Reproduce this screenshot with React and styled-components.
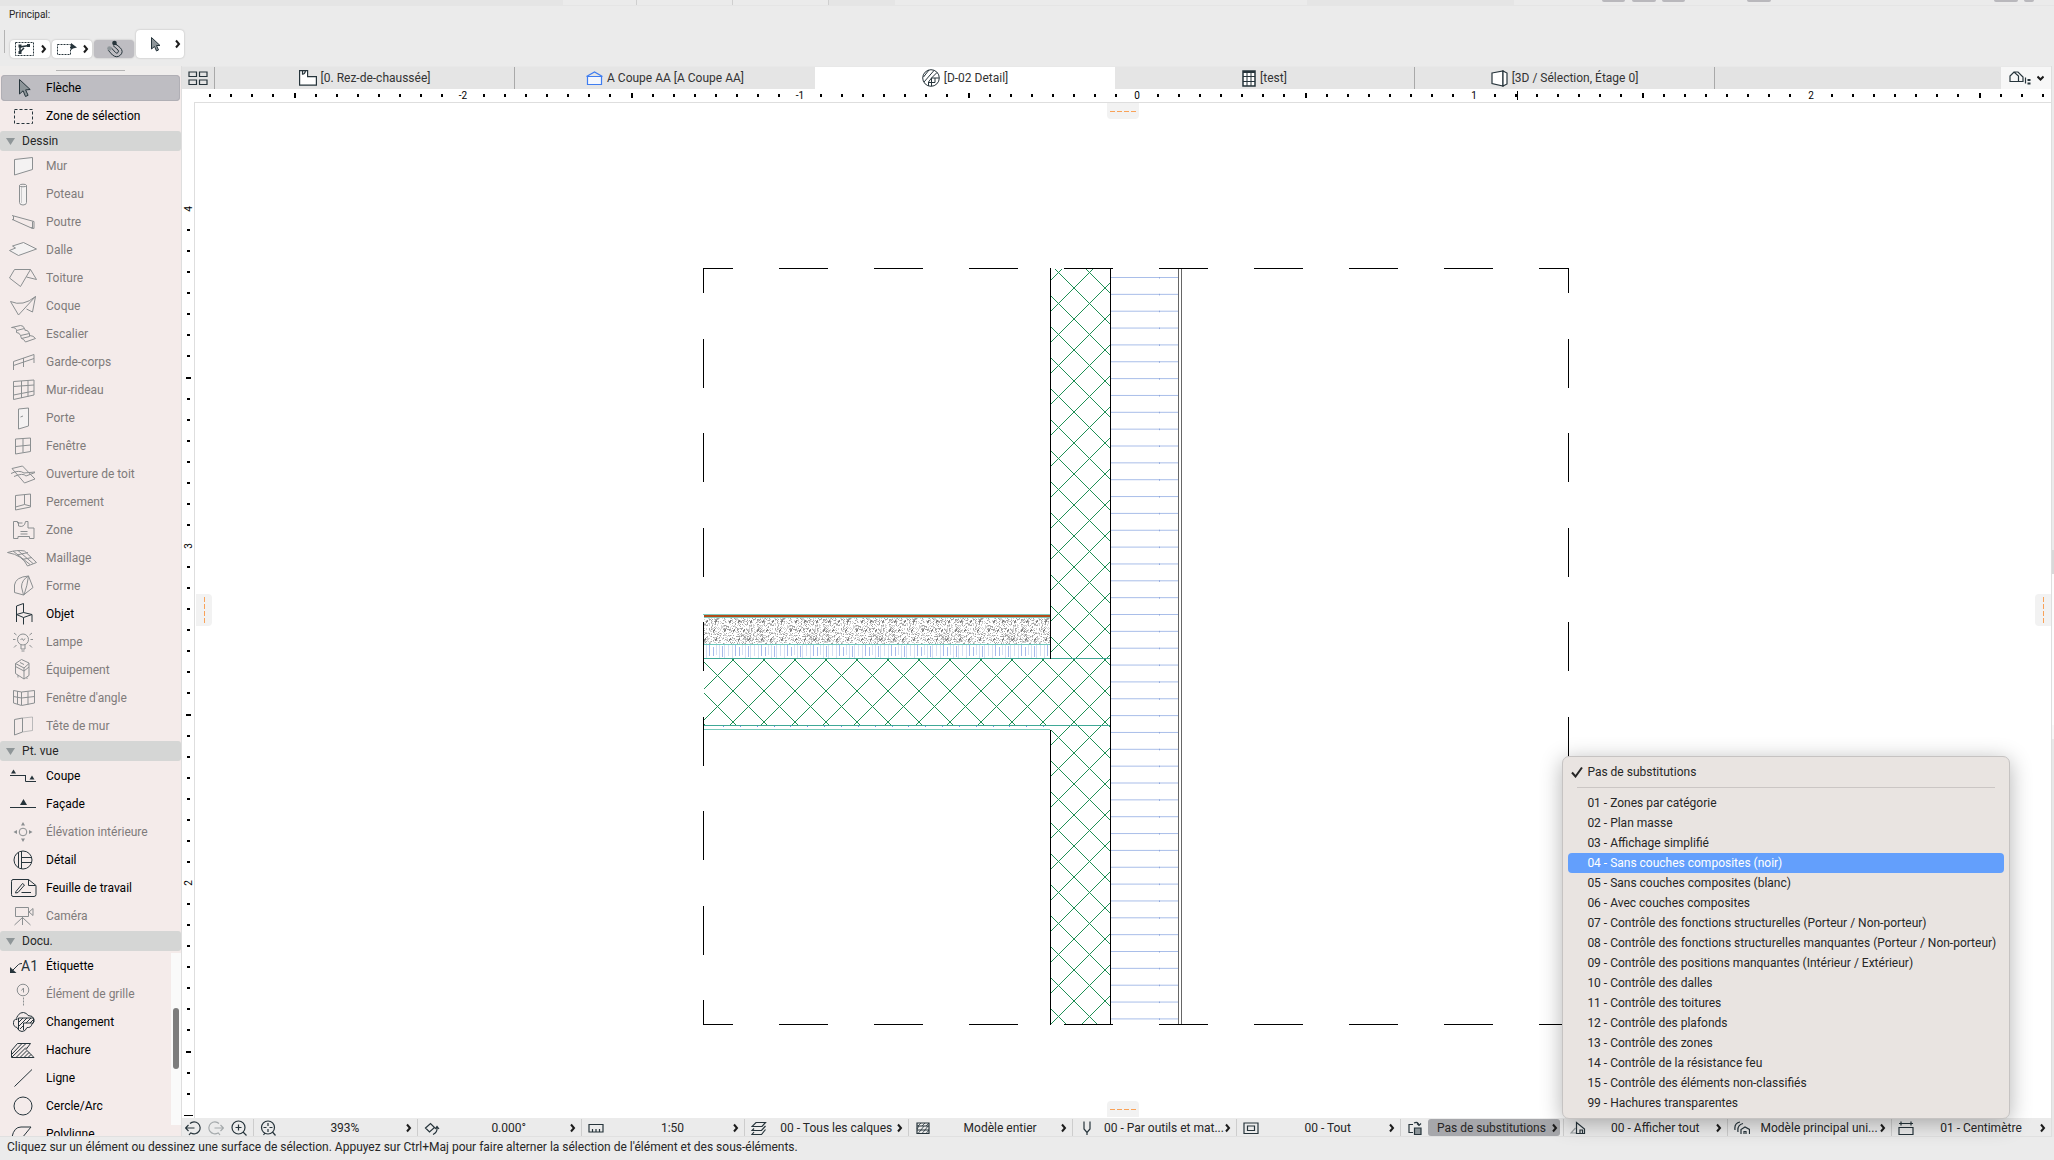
import React from "react";
import { useState } from "react";
import styled, { createGlobalStyle } from "styled-components";

const colors = {
  panel: "#ebebeb",
  strip: "#e5e5e5",
  border: "#dedede",
  palette: "#f4ebea",
  header: "#d5d6d5",
  ink: "#26343b",
  dim: "#8b8f91",
  selected: "#bebdc2",
  accent: "#639ffc",
};

const GlobalStyle = createGlobalStyle`
  * {
    box-sizing: border-box;
  }
  body {
    margin: 0;
    background: ${colors.panel};
    color: #262626;
    font-family: Roboto, Inter, "Liberation Sans", sans-serif;
    font-size: 12px;
    line-height: 16px;
  }
  button {
    font: inherit;
    color: inherit;
    border: none;
    background: none;
    padding: 0;
    margin: 0;
  }
  svg {
    display: block;
    flex: none;
  }
`;

const Window = styled.div`
  display: flex;
  flex-direction: column;
  height: 100vh;
  overflow: hidden;
`;

const TopStrip = styled.div`
  display: flex;
  height: 6px;
  flex: none;
  border-bottom: 1px solid ${colors.strip};
`;

const StripPart = styled.div`
  flex: ${(props) => props.$grow} 0 0;
  background: ${(props) => (props.$dark ? colors.strip : colors.panel)};
  border-right: ${(props) => (props.$tick ? "1px solid #cfcfcf" : "none")};
`;

const StripStub = styled.div`
  flex: ${(props) => props.$grow} 0 0;
  height: 2px;
  border-radius: 0 0 2px 2px;
  background: ${(props) => (props.$on ? "#b9b8bc" : "transparent")};
`;

const Toolbar = styled.header`
  display: flex;
  flex-direction: column;
  justify-content: space-between;
  height: 60px;
  flex: none;
  padding: 1px 9px 8px;
  background: ${colors.panel};
`;

const ToolbarTitle = styled.div`
  font-size: 10px;
  line-height: 16px;
`;

const ToolbarRow = styled.div`
  display: flex;
  align-items: flex-end;
  gap: 2px;
  margin-left: -5px;
`;

const ToolbarGrip = styled.div`
  width: 1px;
  height: 23px;
  margin-right: 3px;
  align-self: flex-start;
  background: #b4b4b4;
`;

const ToolButton = styled.button`
  display: flex;
  align-items: center;
  justify-content: ${(props) => (props.$pressed ? "center" : "space-between")};
  width: ${(props) => (props.$large ? 48 : 40)}px;
  height: ${(props) => (props.$large ? 28 : 18)}px;
  padding: ${(props) => (props.$large ? "0 3px 0 14px" : "0 3px 0 5px")};
  border-radius: 4px;
  background: ${(props) => (props.$pressed ? colors.selected : "#fff")};
  box-shadow: 0 0 2px rgba(0, 0, 0, 0.25);
`;

const Main = styled.div`
  display: grid;
  grid-template-columns: 182px minmax(0, 1fr);
  flex: 1;
  min-height: 0;
`;

const Sidebar = styled.nav`
  display: flex;
  flex-direction: column;
  min-height: 0;
  border-right: 1px solid ${colors.border};
  border-bottom: 1px solid #e0e0e0;
  background: ${colors.palette};
`;

const SidebarGrip = styled.div`
  display: flex;
  justify-content: center;
  align-items: center;
  height: 9px;
  flex: none;
  background: #efedec;

  &::after {
    content: "";
    width: 69px;
    height: 1px;
    background: #b4b4b4;
  }
`;

const SectionHeader = styled.button`
  display: flex;
  align-items: center;
  gap: 7px;
  width: 100%;
  height: 20px;
  flex: none;
  margin: 1px 0;
  padding-left: 6px;
  border-radius: 3px;
  background: ${colors.header};
`;

const Tool = styled.button`
  display: flex;
  align-items: center;
  gap: 7px;
  width: 179px;
  height: 28px;
  flex: none;
  padding-left: 7px;
  color: #000;
  text-align: left;

  svg {
    width: 32px;
    height: 24px;
    color: ${colors.ink};
  }

  &:disabled {
    color: #7f7b7b;
  }

  &:disabled svg {
    color: ${colors.dim};
  }

  &[aria-pressed="true"] {
    height: 26px;
    margin: 0 1px 1px;
    padding-left: 6px;
    border-radius: 4px;
    background: ${colors.selected};
    box-shadow: inset 0 0 0 1px #b0afb5;
  }
`;

const ScrollSection = styled.div`
  display: flex;
  flex: 1;
  min-height: 0;
  overflow: hidden;
`;

const ScrollList = styled.div`
  flex: 1;
  min-width: 0;
`;

const ScrollTrack = styled.div`
  display: flex;
  justify-content: center;
  width: 10px;
  margin: 1px 0 11px;
  padding-top: 55px;
  background: #fafafa;

  &::after {
    content: "";
    width: 6px;
    height: 61px;
    border-radius: 3px;
    background: #7d7d7d;
  }
`;

const Workspace = styled.main`
  display: grid;
  grid-template-rows: 23px 13px minmax(0, 1fr) 19px;
  grid-template-columns: minmax(0, 1fr) 3px;
  min-width: 0;
`;

const TabBar = styled.div`
  display: flex;
  border-top: 1px solid #e8e8e8;
  background: #e3e3e3;
`;

const OverviewButton = styled.button`
  display: flex;
  align-items: center;
  justify-content: center;
  width: 33px;
  flex: none;
  border-right: 1px solid #a9a9a9;
`;

const Tab = styled.button`
  display: flex;
  align-items: center;
  justify-content: center;
  gap: 4px;
  flex: 0 1 300px;
  min-width: 0;
  white-space: nowrap;
  color: #333;
  background: ${(props) => (props.$active ? "#fff" : "#e5e5e5")};
  border-right: ${(props) => (props.$line ? "1px solid #a9a9a9" : "none")};
`;

const TabMenu = styled.button`
  display: flex;
  align-items: center;
  justify-content: center;
  gap: 6px;
  width: 50px;
  margin-left: auto;
  background: #f7f7f7;
`;

const Gutter = styled.div`
  display: flex;
  flex-direction: column;
  grid-column: 2;
  grid-row: 1 / 5;
  border-left: 1px solid ${colors.border};
`;

const GutterPart = styled.div`
  flex: ${(props) => props.$grow} 0 0;
  background: ${(props) => props.$tone};
`;

const HorizontalRuler = styled.div`
  grid-column: 1;
  overflow: hidden;
  background: #fff;

  svg {
    width: 100%;
    height: 13px;
  }
`;

const CanvasRow = styled.div`
  display: flex;
  grid-column: 1;
  min-height: 0;
  background: #fff;
`;

const VerticalRuler = styled.div`
  width: 13px;
  flex: none;
  overflow: hidden;
  border-right: 1px solid ${colors.border};

  svg {
    width: 13px;
    height: 100%;
  }
`;

const Canvas = styled.div`
  position: relative;
  flex: 1;
  min-width: 0;
  overflow: hidden;
`;

const DrawingSvg = styled.svg`
  width: 100%;
  height: 100%;
  border-top: 1px solid ${colors.border};
`;

const edgePlaces = {
  top: "top: 1px; left: calc(50% - 16px); border-radius: 0 0 4px 4px;",
  bottom: "bottom: 1px; left: calc(50% - 16px); border-radius: 4px 4px 0 0;",
  left: "left: 1px; top: calc(50% - 16px); border-radius: 0 4px 4px 0;",
  right: "right: 0; top: calc(50% - 16px); border-radius: 4px 0 0 4px;",
};

const EdgeHandle = styled.div`
  position: absolute;
  display: flex;
  flex-direction: ${(props) => (props.$vertical ? "column" : "row")};
  align-items: center;
  justify-content: center;
  gap: 2px;
  width: ${(props) => (props.$vertical ? 16 : 32)}px;
  height: ${(props) => (props.$vertical ? 32 : 16)}px;
  background: #f2f2f2;
  ${(props) => edgePlaces[props.$edge]}

  i {
    width: ${(props) => (props.$vertical ? 1 : 5)}px;
    height: ${(props) => (props.$vertical ? 5 : 1)}px;
    background: #f9a258;
  }
`;

const OptionBar = styled.div`
  display: flex;
  grid-column: 1;
  min-width: 0;
  background: ${colors.panel};
  padding-top: 1px;
  border-bottom: 1px solid #e0e0e0;
`;

const ZoomGroup = styled.div`
  display: flex;
  align-items: center;
  gap: 7px;
  width: 72px;
  flex: none;
  padding-left: 3px;
  border-right: 1px solid #cdcdcd;
`;

const OptionCell = styled.div`
  position: relative;
  display: flex;
  align-items: center;
  flex: ${(props) => (props.$last ? 160 : 164)} 0 0;
  min-width: 0;
  padding: 0 3px 0 6px;
  border-right: ${(props) => (props.$last ? "none" : "1px solid #cdcdcd")};
`;

const OptionIcon = styled.span`
  display: flex;
  width: 21px;
  flex: none;
`;

const OptionButton = styled.button`
  display: flex;
  align-items: center;
  flex: 1;
  min-width: 0;
  height: 17px;
  padding: 0 2px 0 4px;
  border-radius: 3px;
  background: ${(props) => (props.$open ? "#a6a7ab" : "transparent")};
`;

const OptionLabel = styled.span`
  flex: 1;
  min-width: 0;
  white-space: nowrap;
  text-align: center;
`;

const Menu = styled.ul`
  position: absolute;
  left: calc(100% - 1px);
  bottom: 100%;
  z-index: 5;
  width: 448px;
  margin: 0;
  padding: 5px;
  list-style: none;
  border-radius: 7px;
  border: 1px solid #c6c3c2;
  background: #e9e4e1;
  box-shadow: 0 4px 22px rgba(0, 0, 0, 0.3);
`;

const MenuItem = styled.li`
  button {
    display: flex;
    align-items: center;
    gap: 4px;
    width: 100%;
    height: 20px;
    padding-left: 3px;
    border-radius: 4px;
    white-space: nowrap;
    color: ${(props) => (props.$active ? "#fff" : "#262626")};
    background: ${(props) => (props.$active ? colors.accent : "transparent")};
  }
`;

const CheckSlot = styled.span`
  display: flex;
  width: 12px;
  flex: none;
`;

const MenuRule = styled.li`
  height: 1px;
  margin: 5px 9px;
  background: #cbc6c4;
`;

const StatusBar = styled.footer`
  height: 23px;
  flex: none;
  padding: 2px 7px;
  background: ${colors.panel};
`;

/* palette icons, all on a 32 x 24 grid */
const shapes = {
  arrow: (
    <path
      d="M12.5 3.5V18l3.6-3.2 2.4 5.7 2.6-1.2-2.5-5.4 4.6-.4z"
      fill="#8d9599"
    />
  ),
  marquee: <rect x="7.5" y="5.5" width="18" height="14" strokeDasharray="3 2" />,
  wall: <path d="M7.5 5.5l18-2v12l-18 5.5z" fill="#f4f2f2" />,
  column: (
    <>
      <path d="M12.5 3.5v17q0 2.5 3.5 2.5t3.5-2.5v-17" fill="#f4f2f2" />
      <ellipse cx="16" cy="3.5" rx="3.5" ry="1.3" />
      <path d="M14.5 5v16" strokeOpacity=".4" />
    </>
  ),
  beam: <path d="M5 5.5l22 6M6.5 6v4l19 8.5v-7M5 9.5l1.5.5M24 17.5l3 1v-7" />,
  slab: <path d="M2.5 12.5l6-2.5-3-2 11-3.5 13 6.5-18 6.5z" fill="#f4f2f2" />,
  roof: <path d="M7.5 3.5h16l-10 17-11-8.500zM23.500 3.500l6 10-10-2.500" />,
  shell: <path d="M3.500 7.500Q16 13 28.500 2.500l-3 15.500-6-3M28.500 2.500l-17 18.500-8-13.500" />,
  stair: (
    <path d="M4.500 5.500l9-2q3 0 4 3l-8 2q0-3-5-3zM9.500 8.500v2q3 0 4 3l9-2q-1-3-4-3.500M17.500 6.500l1 2.500M13.500 13.500l1 3 8-2v-3M14.500 16.500q2 0 4 3.500l10-3.500q-2-3-6-3" />
  ),
  railing: <path d="M6.500 20v-8.500l20.500-7v8.500M6.500 15.500l20.500-7M16.500 8v9" />,
  curtain: (
    <path d="M6.500 3.500l20.500-1.500v15l-20.500 4.500zM14.500 3v17M21 2.500v16M6.500 8.500l20.500-1.500M6.500 17l20.500-4" />
  ),
  door: <path d="M11.500 3l10-1v18l-10 3zM13.500 11l2.500-1" fill="#f4f2f2" />,
  windowIcon: <path d="M8.500 5l15-1v13.500l-15 2.500zM16 4.500v14M8.500 12.500l15-1.500" />,
  skylight: (
    <path d="M5 6.500l10.500-2.500 12.500 13-10.500 4zM4 11.500q8-4 13-.5l11-1M7 14.500q9-4 12-.5l9-3.500" />
  ),
  opening: <path d="M8.500 5.500l15-1.500v13l-15 3zM17.500 4.500v10l-9 2.500M17.500 14.500l6 1.500" />,
  zone: (
    <>
      <path d="M11.500 4v4q6 2 7-4.500h2.500v6.500h6v10.500h-4.500v-2h-11.500v2h-4.500v-17h4v1.500h5" />
      <path d="M13.500 13.500h7M13.500 16h7" />
    </>
  ),
  mesh: (
    <path d="M.5 6.500q10-3 17-1.500l12 11.500-9 3.500q-5-11-20-13.500zM6 5l17 13.500M11 4.500l15 13M10 9l11-2.500M15 13.500l10-2" />
  ),
  morph: (
    <path d="M7.500 18.500v-7.500q1-8 14-9l4.500 11.500-9.500 7.500zM21.500 2q-7 4-7 11l2 8M21.500 2q-1 9-4.500 19" />
  ),
  object: (
    <path d="M9.500 20v-16l7-2.500v9l-7 2 7 3 8.500-3-8.500-2M16.500 15.500v7M25 12.500v7.500" />
  ),
  lamp: (
    <>
      <circle cx="16" cy="9.500" r="5.500" />
      <path d="M14 14.500v4.500h4v-4.500M14.500 21h3M13.500 10l1.500-1.500 1.500 2 1.500-2M6 9.500h2.500M23.500 9.500h2.500M7 3l2.500 2M25 3l-2.500 2M7 17.500l2.500-2.500M25 17.500l-2.500-2.500" />
    </>
  ),
  equipment: (
    <path d="M8.500 5.500l6-4 7.500 3.500v12.500l-5 3.500-8.500-5.500zM8.500 5.500l8.500 4.500v11M17 10l5-4.500M8.500 8.500l8.500 4.500 5-4M13 4.500l4 2M11 17v2.500M20 19.500v1.500" />
  ),
  cornerWindow: (
    <path d="M6.500 4.500l8 1.500 13-1.500v12.500l-13 2.500-8-2.500zM14.500 6v13M10.500 5v13M21 5.500v13M6.500 10.500l8 1.500 13-1.500" />
  ),
  wallEnd: (
    <>
      <path d="M7.500 5.500l8-1.500v14l-8 3z" />
      <path d="M15.500 4l10-1v13.500l-10 1.500" strokeOpacity=".55" />
    </>
  ),
  section: (
    <>
      <path d="M3 11.500h16M18.500 11.500v6" strokeDasharray="16 2 2 2" />
      <path d="M18.500 17.500h10.500" />
      <path d="M4 9.500l2.500-4 2.500 4zM22.500 15.500l2.500-4 2.500 4z" fill="currentColor" stroke="none" />
    </>
  ),
  elevation: (
    <>
      <path d="M3 15.500h26" />
      <path d="M13 13l3.500-6 3.500 6z" fill="currentColor" stroke="none" />
    </>
  ),
  interior: (
    <>
      <circle cx="16" cy="12" r="3.800" />
      <path
        d="M14 5.500l2-3.500 2 3.500zM14 18.500l2 3.500 2-3.500zM10 10l-3.500 2 3.500 2zM22 10l3.500 2-3.500 2z"
        fill="currentColor"
        stroke="none"
      />
    </>
  ),
  detail: (
    <>
      <circle cx="16" cy="12" r="9" />
      <path d="M11.500 4.500v15M14.500 3v18M14.500 9.500h10M14.500 14.500h10" />
    </>
  ),
  worksheet: (
    <>
      <path d="M6 3.500h15.500l7.500 6v9q0 2-2 2h-21q-1.500 0-1.500-2v-13q0-2 1.500-2zM21.500 3.500v6h7" />
      <path d="M9 15.500l6.500-8 2 1.500-6.500 7.500-2.500.5zM14.500 16.500h9.500" />
    </>
  ),
  camera: <path d="M8.500 3.500h13v9h-13zM22 8l4-3.500v7zM15.500 12.500v8.500M15.500 13.500l-8 7.500M15.500 13.500l8 7.500" />,
  label: (
    <>
      <path d="M5.500 16.500l6-6q1-1 3.500-1" />
      <path d="M3 13v6h6.500z" fill="currentColor" stroke="none" />
      <text x="14" y="17" fontSize="14" fill="currentColor" stroke="none">
        A1
      </text>
    </>
  ),
  gridElement: (
    <>
      <circle cx="16" cy="8" r="5.800" />
      <path d="M14.500 8.500l2-2.500v4.500" />
      <path d="M16.500 15.500v8" strokeDasharray="2 1" />
    </>
  ),
  change: (
    <>
      <path d="M11 5.500q2-3.500 5.500-3t4.500 3q5 0 6 3.500t-2 5q-1 4-5 3.500-1.500 4-5 4t-5-4q-4-1-3.500-5t3.500-3q-1-2 1-4z" />
      <path d="M11.500 20v-12h15v5h-10v7M12 12l4-4M12 16l8-8M13 19l3-3M19 13l5-5M23 13l3-3" />
    </>
  ),
  fill: (
    <path d="M4.500 19.500v-7l6-7h13l-4.500 6 8 8zM5 16l10-10.500M5 19l14-13.500M9 19.500l10-10M13 19.500l6.500-6.500M17 19.500l5-5M21 19.500l3-3" />
  ),
  line: <path d="M7.500 20.500l17.500-17" />,
  circle: <circle cx="16" cy="12" r="9" />,
  polyline: <path d="M5 15q2-10 9-10h10l-9 11" />,
};

const Glyph = ({ name }) => (
  <svg viewBox="0 0 32 24" fill="none" stroke="currentColor" strokeWidth="1" aria-hidden="true">
    {shapes[name]}
  </svg>
);

const drawingTools = [
  ["wall", "Mur"],
  ["column", "Poteau"],
  ["beam", "Poutre"],
  ["slab", "Dalle"],
  ["roof", "Toiture"],
  ["shell", "Coque"],
  ["stair", "Escalier"],
  ["railing", "Garde-corps"],
  ["curtain", "Mur-rideau"],
  ["door", "Porte"],
  ["windowIcon", "Fenêtre"],
  ["skylight", "Ouverture de toit"],
  ["opening", "Percement"],
  ["zone", "Zone"],
  ["mesh", "Maillage"],
  ["morph", "Forme"],
  ["object", "Objet", true],
  ["lamp", "Lampe"],
  ["equipment", "Équipement"],
  ["cornerWindow", "Fenêtre d'angle"],
  ["wallEnd", "Tête de mur"],
];

const viewTools = [
  ["section", "Coupe", true],
  ["elevation", "Façade", true],
  ["interior", "Élévation intérieure"],
  ["detail", "Détail", true],
  ["worksheet", "Feuille de travail", true],
  ["camera", "Caméra"],
];

const docTools = [
  ["label", "Étiquette", true],
  ["gridElement", "Élément de grille"],
  ["change", "Changement", true],
  ["fill", "Hachure", true],
  ["line", "Ligne", true],
  ["circle", "Cercle/Arc", true],
  ["polyline", "Polyligne", true],
];

const Chevron = ({ down }) => (
  <svg width="7" height="10" viewBox="0 0 7 10" fill="none" stroke="#1c1c1c" strokeWidth="2">
    <path d={down ? "M.5 3.500l3 3 3-3" : "M2 1.500l3 3.500-3 3.500"} />
  </svg>
);

const Section = ({ title }) => (
  <SectionHeader>
    <svg width="9" height="7" viewBox="0 0 9 7">
      <path d="M0 0h9L4.500 7z" fill="#8f9698" />
    </svg>
    {title}
  </SectionHeader>
);

const ToolList = ({ tools }) =>
  tools.map(([icon, label, enabled]) => (
    <Tool key={label} disabled={!enabled}>
      <Glyph name={icon} />
      {label}
    </Tool>
  ));

const tabs = [
  {
    label: "[0. Rez-de-chaussée]",
    line: true,
    icon: (
      <svg width="18" height="16" viewBox="0 0 18 16" fill="#fff" stroke={colors.ink} strokeWidth="1.200">
        <path d="M.6.6h8v6h8.800v8.600H.6zM3.500.6v3.600q2.500 0 3-3.600" />
      </svg>
    ),
  },
  {
    label: "A Coupe AA [A Coupe AA]",
    icon: (
      <svg width="17" height="14" viewBox="0 0 17 14" fill="none" stroke="#3f7df0" strokeWidth="1.200">
        <path d="M1.500 5.500h14v8h-14z" fill="#f4f7fd" />
        <path d="M.5 5.500l8-4.500 8 4.500" />
      </svg>
    ),
  },
  {
    label: "[D-02 Detail]",
    active: true,
    icon: (
      <svg width="18" height="18" viewBox="0 0 18 18" fill="none" stroke={colors.ink}>
        <circle cx="9" cy="9" r="8.300" />
        <path d="M1.500 8l5.500-7M2 13l10-11.500M9.500 9l5.500-5.500M9.500 17V9h7.500M6.500 17v-4l3-4M6.500 13.500h6.500V9" />
      </svg>
    ),
  },
  {
    label: "[test]",
    line: true,
    icon: (
      <svg width="14" height="17" viewBox="0 0 14 17" fill="none" stroke={colors.ink}>
        <path d="M1 1h12v15H1z" fill="#fff" strokeWidth="1.500" />
        <path d="M1 2h12" strokeWidth="2" />
        <path d="M5 1v15M9 1v15M1 6.500h12M1 11.500h12" />
      </svg>
    ),
  },
  {
    label: "[3D / Sélection, Étage 0]",
    line: true,
    icon: (
      <svg width="17" height="17" viewBox="0 0 17 17" fill="#fff" stroke={colors.ink} strokeWidth="1.200">
        <path d="M1 3l11-2v15l-11-2.500z" />
        <path d="M12 1l4 2v11l-4 2z" />
      </svg>
    ),
  },
];

const OverviewIcon = () => (
  <svg width="20" height="15" viewBox="0 0 20 15" fill="none" stroke={colors.ink} strokeWidth="1.200">
    <path d="M1 1h7.500v4.500H1zM11.500 1H19v4.500h-7.500zM1 9h7.500v4.500H1zM11.500 9H19v4.500h-7.500z" />
  </svg>
);

/* one metre on screen is 337px, ticks come every sixteenth */
const METRE = 337;

const rulerMarks = (origin, start, end, direction) => {
  const marks = [];
  for (let i = -64; i <= 64; i++) {
    const pos = Math.round(origin + (i * METRE) / 16);
    if (pos < start || pos > end) continue;
    marks.push({
      pos,
      major: i % 8 === 0,
      label: i % 16 === 0 ? String((direction * i) / 16) : null,
    });
  }
  return marks;
};

const RulerX = () => (
  <svg aria-hidden="true">
    {rulerMarks(955, 13, 1866, 1).map((m) =>
      m.label ? (
        <text key={m.pos} x={m.pos} y="10" fontSize="10" textAnchor="middle">
          {m.label}
        </text>
      ) : (
        <rect key={m.pos} x={m.pos - 1} y={m.major ? 4 : 5} width="2" height={m.major ? 5 : 3} />
      )
    )}
    <rect x="1335" y="2" width="1" height="9" />
  </svg>
);

const RulerY = () => (
  <svg aria-hidden="true">
    {rulerMarks(1455, 1, 1012, -1).map((m) =>
      m.label ? (
        <text
          key={m.pos}
          x={10}
          y={m.pos}
          fontSize="10"
          textAnchor="middle"
          transform={`rotate(-90 10 ${m.pos})`}
        >
          {m.label}
        </text>
      ) : (
        <rect key={m.pos} x={m.major ? 4 : 5} y={m.pos - 1} width={m.major ? 5 : 3} height="2" />
      )
    )}
    <rect x="2" y="1013" width="9" height="1" />
  </svg>
);

/* grains of the screed hatch */
const grains = () => {
  const out = [];
  let seed = 7;
  const rand = () => {
    seed = (seed * 16807) % 2147483647;
    return seed / 2147483647;
  };
  for (let i = 0; i < 900; i++) {
    out.push([Math.floor(rand() * 66), Math.floor(rand() * 26), rand() > 0.4 ? "#d2d2d2" : "#a2a2a2"]);
  }
  for (let row = 0; row < 3; row++) {
    for (let col = 0; col < 6; col++) {
      const x = col * 11 + (row % 2 ? 6 : 0) + Math.floor(rand() * 4);
      const y = 3 + row * 9;
      [[0, 0], [1, 0], [0, 1], [1, -1]].forEach(([dx, dy]) => out.push([x + dx, y + dy, "#808080"]));
    }
  }
  return out;
};

const Drawing = () => (
  <DrawingSvg role="img" aria-label="D-02 Detail">
    <defs>
      <pattern id="brick" x="20" y="9" width="31" height="31" patternUnits="userSpaceOnUse">
        <path d="M-1-1l33 33M32-1l-33 33" stroke="#1f9055" strokeWidth="1" />
      </pattern>
      <pattern id="screed" x="704" y="618" width="66" height="26" patternUnits="userSpaceOnUse">
        {grains().map(([x, y, tone], i) => (
          <rect key={i} x={x} y={y} width="1" height="1" fill={tone} />
        ))}
      </pattern>
      <pattern id="wool" x="704" y="645" width="26" height="13" patternUnits="userSpaceOnUse">
        <path d="M2.500 0v13M12.500 0v10M15.500 0v13M20.500 0v13M24.500 0v11" stroke="#d5dff4" />
        <path d="M5.500 0v11M9.500 2v9M18.500 1v11" stroke="#a6baeb" />
      </pattern>
    </defs>
    <g transform="translate(-195 -103)">
      <rect x="1051" y="269" width="59" height="390" fill="url(#brick)" />
      <rect x="704" y="659" width="406" height="66" fill="url(#brick)" />
      <rect x="1051" y="726" width="59" height="298" fill="url(#brick)" />

      {Array.from({ length: 45 }, (_, i) => (
        <g key={i}>
          <rect x="1111" y={277 + i * 16.85} width="67" height="1" fill="#a9bee9" />
          <rect x="1159" y={277 + i * 16.85} width="1" height="1.500" fill="#8ea6dc" />
        </g>
      ))}

      <rect x="704" y="618" width="346" height="26" fill="url(#screed)" />
      <rect x="704" y="645" width="346" height="13" fill="url(#wool)" />
      {Array.from({ length: 20 }, (_, i) => (
        <rect key={i} x={723 + Math.round(i * 16.85)} y="726" width="1" height="1" fill="#6f93e8" />
      ))}

      <g shapeRendering="crispEdges">
        <rect x="703" y="614" width="347" height="1" fill="#7fcabd" />
        <rect x="704" y="615" width="346" height="2" fill="#b04c1a" />
        <rect x="704" y="617" width="346" height="1" fill="#7fcabd" />
        <rect x="704" y="644" width="346" height="1" fill="#6fc9bd" />
        <rect x="703" y="658" width="407" height="1" fill="#3fa896" />
        <rect x="703" y="725" width="407" height="1" fill="#3fa896" />
        <rect x="704" y="729" width="346" height="1" fill="#78c9bb" />
        <rect x="1050" y="268" width="1" height="391" />
        <rect x="1050" y="730" width="1" height="295" />
        <rect x="1110" y="268" width="1" height="757" />
        <rect x="1178" y="268" width="1" height="757" fill="#666" />
        <rect x="1181" y="268" width="1" height="757" fill="#666" />
        <g stroke="#000" fill="none">
          <path d="M703 268.500h866M703 1024.500h866" strokeDasharray="49 46" strokeDashoffset="19" />
          <path d="M703.500 268v757M1568.500 268v757" strokeDasharray="49 45.500" strokeDashoffset="24" />
        </g>
      </g>
    </g>
  </DrawingSvg>
);

const Handle = ({ edge }) => (
  <EdgeHandle $edge={edge} $vertical={edge === "left" || edge === "right"}>
    <i />
    <i />
    <i />
    <i />
  </EdgeHandle>
);

const BarIcon = ({ children, width = 16 }) => (
  <svg width={width} height="16" viewBox={`0 0 ${width} 16`} fill="none" stroke={colors.ink} strokeWidth="1.200">
    {children}
  </svg>
);

const options = [
  {
    label: "393%",
    icon: (
      <BarIcon>
        <circle cx="8" cy="7.500" r="6.500" />
        <path d="M12.500 12l3 3.500M3.500 15l1.500-2M8 3v3M8 9v3M3.500 7.500h3M9.500 7.500h3" />
      </BarIcon>
    ),
  },
  {
    label: "0.000°",
    icon: (
      <BarIcon>
        <path d="M1.500 8l5-4.500 4 4-5 4.500zM9 14.500q4.500-2 4-7M11 9l2-2.500 2 2.500" />
      </BarIcon>
    ),
  },
  {
    label: "1:50",
    icon: (
      <BarIcon>
        <path d="M1 4.500h14v7.500H1zM4.500 12v-3M8 12v-3M11.500 12v-3" />
      </BarIcon>
    ),
  },
  {
    label: "00 - Tous les calques",
    icon: (
      <BarIcon>
        <path d="M5 2.500h9.500l-3.500 4H1zM3 8.500l-2 2h9.500l4-4.500M3 12l-2 2.500h9.500l4-5" />
      </BarIcon>
    ),
  },
  {
    label: "Modèle entier",
    icon: (
      <BarIcon>
        <path d="M2 3h12v10.500H2zM2 6h12M2 10h12" />
        <path
          d="M3 13.500l3-3.500M7 13.500l3-3.500M11 13.500l3-3.500M3 6l3-3M7 6l3-3M11 6l3-3M2 9l2-3M6 10l3-4M10 10l3-4"
          strokeWidth=".8"
        />
      </BarIcon>
    ),
  },
  {
    label: "00 - Par outils et mat...",
    icon: (
      <BarIcon>
        <path d="M5 1.500v7.500l3 3.500 3-3.500V1.500M8 12v3" />
      </BarIcon>
    ),
  },
  {
    label: "00 - Tout",
    icon: (
      <BarIcon>
        <path d="M1 3h14v10.500H1zM4.500 6h7v4.500h-7z" />
      </BarIcon>
    ),
  },
  {
    label: "Pas de substitutions",
    menu: true,
    icon: (
      <BarIcon>
        <path d="M6 4.500H2v8h4" />
        <path d="M7 3q4-2 5 2.500M10 3.500l2 2 2-2" />
        <path d="M7.500 8h6.500v6.500H7.500z" fill="#8d9599" />
      </BarIcon>
    ),
  },
  {
    label: "00 - Afficher tout",
    icon: (
      <BarIcon>
        <path d="M5.500 8L1 13h5" stroke="#9a9fa1" />
        <path d="M6.500 13.500V8V2.500l8 6.500v4.500zM10 13.500V10h2.500v3.500" />
      </BarIcon>
    ),
  },
  {
    label: "Modèle principal uni...",
    icon: (
      <BarIcon>
        <path d="M1 10q-1-7 5-8M4 12q-1-7 5-8.500M7 14V9.500l4-2.500 4.500 2.500V14M10 14v-2.500h2v2.500" />
      </BarIcon>
    ),
  },
  {
    label: "01 - Centimètre",
    icon: (
      <BarIcon>
        <path d="M1 3.500h14M3 1.500v4M13 1.500v4M1 7.500h14v7H1z" />
      </BarIcon>
    ),
  },
];

const overrides = [
  "01 - Zones par catégorie",
  "02 - Plan masse",
  "03 - Affichage simplifié",
  "04 - Sans couches composites (noir)",
  "05 - Sans couches composites (blanc)",
  "06 - Avec couches composites",
  "07 - Contrôle des fonctions structurelles (Porteur / Non-porteur)",
  "08 - Contrôle des fonctions structurelles manquantes (Porteur / Non-porteur)",
  "09 - Contrôle des positions manquantes (Intérieur / Extérieur)",
  "10 - Contrôle des dalles",
  "11 - Contrôle des toitures",
  "12 - Contrôle des plafonds",
  "13 - Contrôle des zones",
  "14 - Contrôle de la résistance feu",
  "15 - Contrôle des éléments non-classifiés",
  "99 - Hachures transparentes",
];

const OverrideMenu = () => {
  const [hovered, setHovered] = useState(3);

  return (
    <Menu role="menu">
      <MenuItem role="none">
        <button role="menuitemradio" aria-checked="true">
          <CheckSlot>
            <svg width="12" height="12" viewBox="0 0 12 12" fill="none" stroke="#262626" strokeWidth="2">
              <path d="M1 6.500l3.500 4L11 1.500" />
            </svg>
          </CheckSlot>
          Pas de substitutions
        </button>
      </MenuItem>
      <MenuRule role="separator" />
      {overrides.map((label, i) => (
        <MenuItem key={label} role="none" $active={hovered === i}>
          <button role="menuitemradio" aria-checked="false" onMouseEnter={() => setHovered(i)}>
            <CheckSlot />
            {label}
          </button>
        </MenuItem>
      ))}
    </Menu>
  );
};

const App = () => {
  const [open, setOpen] = useState(true);

  return (
    <>
      <GlobalStyle />
      <Window>
        <TopStrip>
          <StripPart $grow={564} $dark />
          <StripPart $grow={73} $tick />
          <StripPart $grow={95} $tick />
          <StripPart $grow={95} $tick />
          <StripPart $grow={66} $dark />
          <StripPart $grow={413} />
          <StripPart $grow={207} $dark />
          <StripPart $grow={88} />
          {[23, 7, 24, 6, 23, 63, 24, 223, 24, 6, 10, 20].map((w, i) => (
            <StripStub key={i} $grow={w} $on={i % 2 === 0} />
          ))}
        </TopStrip>

        <Toolbar>
          <ToolbarTitle>Principal:</ToolbarTitle>
          <ToolbarRow>
            <ToolbarGrip />
            <ToolButton aria-label="Sélection rapide">
              <svg width="19" height="14" viewBox="0 0 19 14" fill="none" stroke={colors.ink}>
                <path d="M.5 .5h18v13H.5z" strokeDasharray="2 1" />
                <path d="M5 11V5l9-1.500M5 10l4-4" strokeWidth="1.500" />
                <path d="M3.500 2.500h3v3h-3zM12 2h3v3h-3zM3.500 9h3v3h-3z" fill={colors.ink} stroke="none" />
              </svg>
              <Chevron />
            </ToolButton>
            <ToolButton aria-label="Mode de sélection">
              <svg width="20" height="14" viewBox="0 0 20 14" fill="none" stroke={colors.ink}>
                <path d="M.5 2.500h13v10H.5z" strokeDasharray="2 1" />
                <path d="M14 1v7l2-1.500 4-1z" fill={colors.ink} stroke="none" />
              </svg>
              <Chevron />
            </ToolButton>
            <ToolButton $pressed aria-pressed="true" aria-label="Magnétisme">
              <svg width="18" height="18" viewBox="0 0 18 18" fill="none" stroke={colors.ink}>
                <path d="M8 2.500l6 5q4 4 .5 7.500t-8 0l-4.500-5M10.500 5l-3-2.500M5 7.500l4.500 5q1.500 1.500 2.500 0t0-2.500l-5-4.500" />
                <circle cx="8.500" cy="3" r="2.300" fill={colors.ink} stroke="none" />
                <circle cx="3.500" cy="8.500" r="2.300" fill="#8d9599" stroke="none" />
              </svg>
            </ToolButton>
            <ToolButton $large aria-label="Flèche">
              <svg width="12" height="16" viewBox="0 0 12 16" fill="#8d9599" stroke={colors.ink}>
                <path d="M1.500 1.500v11.500l3-2.500 2 4.500 2-1-2-4.500h3.500z" />
              </svg>
              <Chevron />
            </ToolButton>
          </ToolbarRow>
        </Toolbar>

        <Main>
          <Sidebar>
            <SidebarGrip />
            <Tool aria-pressed="true">
              <Glyph name="arrow" />
              Flèche
            </Tool>
            <Tool>
              <Glyph name="marquee" />
              Zone de sélection
            </Tool>
            <Section title="Dessin" />
            <ToolList tools={drawingTools} />
            <Section title="Pt. vue" />
            <ToolList tools={viewTools} />
            <Section title="Docu." />
            <ScrollSection>
              <ScrollList>
                <ToolList tools={docTools} />
              </ScrollList>
              <ScrollTrack />
            </ScrollSection>
          </Sidebar>

          <Workspace>
            <TabBar role="tablist">
              <OverviewButton aria-label="Vue d'ensemble des onglets">
                <OverviewIcon />
              </OverviewButton>
              {tabs.map((tab) => (
                <Tab
                  key={tab.label}
                  role="tab"
                  aria-selected={Boolean(tab.active)}
                  $active={tab.active}
                  $line={tab.line}
                >
                  {tab.icon}
                  {tab.label}
                </Tab>
              ))}
              <TabMenu aria-label="Navigateur">
                <svg width="22" height="16" viewBox="0 0 22 16" fill="none" stroke={colors.ink} strokeWidth="1.200">
                  <path d="M1 11.500V6l4-4 4.500 4v5.500zM5 2h4l5 5v4.500H9.500" />
                  <path d="M16.500 7.500v6" />
                  <path d="M18.500 9h3v2h-3zM18.500 12.500h3v2h-3z" fill={colors.ink} stroke="none" />
                </svg>
                <Chevron down />
              </TabMenu>
            </TabBar>

            <Gutter>
              <GutterPart $grow={484} $tone="#ebebeb" />
              <GutterPart $grow={24} $tone="#d9d9d9" />
              <GutterPart $grow={150} $tone="#fdfdfd" />
              <GutterPart $grow={14} $tone="#f7f7f7" />
              <GutterPart $grow={398} $tone="#e8e8e8" />
            </Gutter>

            <HorizontalRuler>
              <RulerX />
            </HorizontalRuler>

            <CanvasRow>
              <VerticalRuler>
                <RulerY />
              </VerticalRuler>
              <Canvas>
                <Drawing />
                <Handle edge="top" />
                <Handle edge="bottom" />
                <Handle edge="left" />
                <Handle edge="right" />
              </Canvas>
            </CanvasRow>

            <OptionBar>
              <ZoomGroup>
                <button aria-label="Zoom précédent">
                  <BarIcon>
                    <path d="M5 3.500a6 6 0 1 1 1 9.500M.5 8h9M3.500 5l-3 3 3 3M4 15l2-2.500" />
                  </BarIcon>
                </button>
                <button aria-label="Zoom suivant" disabled>
                  <BarIcon>
                    <path
                      d="M11 3.500a6 6 0 1 0-1 9.500M6.500 8h9M12.500 5l3 3-3 3M12 15l-2-2.500"
                      stroke="#a4a9ab"
                    />
                  </BarIcon>
                </button>
                <button aria-label="Zoom avant">
                  <BarIcon>
                    <circle cx="7.500" cy="7.500" r="6.500" />
                    <path d="M7.500 4.500v6M4.500 7.500h6M12 12l3.500 3.500" />
                  </BarIcon>
                </button>
              </ZoomGroup>
              {options.map((option, i) => (
                <OptionCell key={option.label} $last={i === options.length - 1}>
                  <OptionIcon>{option.icon}</OptionIcon>
                  <OptionButton
                    $open={option.menu && open}
                    aria-haspopup={option.menu ? "menu" : undefined}
                    onClick={option.menu ? () => setOpen(!open) : undefined}
                  >
                    <OptionLabel>{option.label}</OptionLabel>
                    <Chevron />
                  </OptionButton>
                  {option.menu && open && <OverrideMenu />}
                </OptionCell>
              ))}
            </OptionBar>
          </Workspace>
        </Main>

        <StatusBar>
          Cliquez sur un élément ou dessinez une surface de sélection. Appuyez sur Ctrl+Maj pour faire alterner la
          sélection de l'élément et des sous-éléments.
        </StatusBar>
      </Window>
    </>
  );
};

export default App;
